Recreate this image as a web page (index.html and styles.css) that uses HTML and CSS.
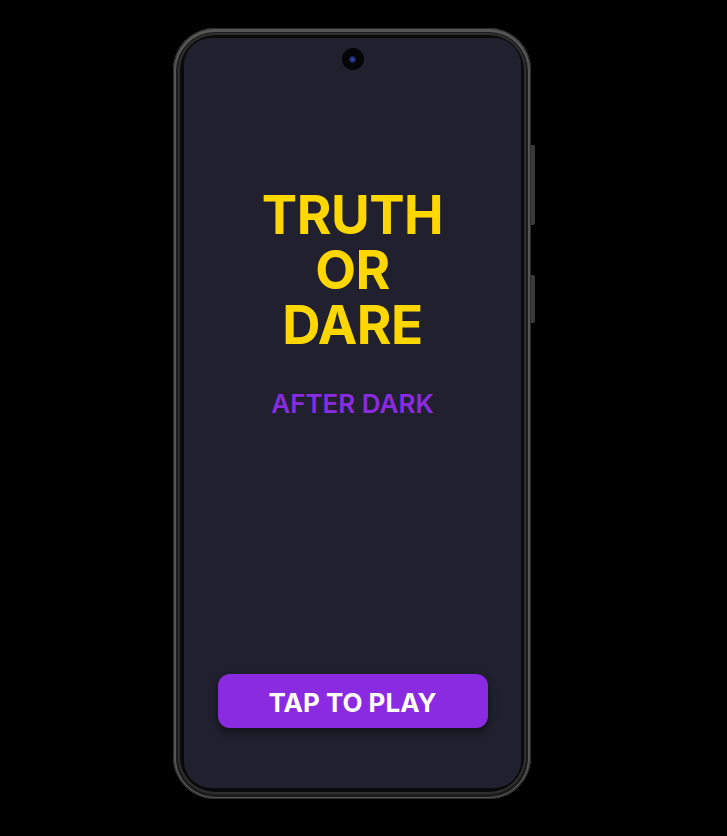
FILE: index.html
```html
<!DOCTYPE html>
<html lang="en">
<head>
<meta charset="utf-8">
<title>Truth or Dare</title>
<link rel="stylesheet" href="styles.css">
</head>
<body>
  <div class="phone">
    <div class="side-btn side-btn-power"></div>
    <div class="side-btn side-btn-vol"></div>
    <div class="screen">
      <div class="camera"><div class="lens"></div></div>
      <h1 class="title"><span class="line">TRUTH</span><span class="line">OR</span><span class="line">DARE</span></h1>
      <p class="subtitle">AFTER DARK</p>
      <button class="play">TAP TO PLAY</button>
    </div>
  </div>
</body>
</html>
```
FILE: styles.css
```css
html, body {
  margin: 0;
  padding: 0;
  background: #000;
}
body {
  width: 727px;
  height: 836px;
  padding: 28px 0 0 173px;
  box-sizing: border-box;
  font-family: Inter, "Noto Sans", sans-serif;
  overflow: hidden;
}
.phone {
  position: relative;
  width: 358px;
  height: 771px;
  box-sizing: border-box;
  padding: 10px 10px 10px 11px;
  border-radius: 42px;
  background: #0a0a0a;
  box-shadow:
    inset 0 0 0 1px #2a2a2a,
    inset 0 1px 0 3px #555,
    inset 0 0 0 5px #1c1c1c,
    inset 0 0 0 7px #2e2e2e;
}
.side-btn {
  position: absolute;
  right: -4px;
  width: 4px;
  background: #3a3a3a;
  border-radius: 0 2px 2px 0;
}
.side-btn-power {
  top: 117px;
  height: 80px;
}
.side-btn-vol {
  top: 247px;
  height: 48px;
}
.screen {
  height: 750px;
  border-radius: 27px;
  background: #20202f;
  display: flex;
  flex-direction: column;
  align-items: center;
  overflow: hidden;
}
.camera {
  margin-top: 10px;
  width: 22px;
  height: 22px;
  border-radius: 50%;
  background: #050508;
  display: flex;
  align-items: center;
  justify-content: center;
}
.lens {
  width: 7px;
  height: 7px;
  border-radius: 50%;
  background: radial-gradient(circle, #3a4fb0 0%, #1a2460 60%, #050508 100%);
}
.title {
  margin: 118px 0 0;
  display: flex;
  flex-direction: column;
  align-items: center;
  font-size: 53px;
  font-weight: 700;
  letter-spacing: -0.5px;
  color: #ffd700;
  text-align: center;
}
.line {
  display: block;
  height: 55px;
  line-height: 55px;
}
.subtitle {
  margin: 35px 0 0;
  font-size: 26px;
  line-height: 32px;
  font-weight: 600;
  color: #8a2be2;
}
.play {
  margin: auto 0 60px;
  width: 270px;
  height: 54px;
  border: none;
  border-radius: 12px;
  background: #8a2be2;
  color: #fff;
  font-family: Inter, "Noto Sans", sans-serif;
  font-size: 26px;
  font-weight: 700;
  padding-top: 3px;
  box-shadow: 0 4px 8px rgba(0, 0, 0, 0.45);
  cursor: pointer;
}
```
